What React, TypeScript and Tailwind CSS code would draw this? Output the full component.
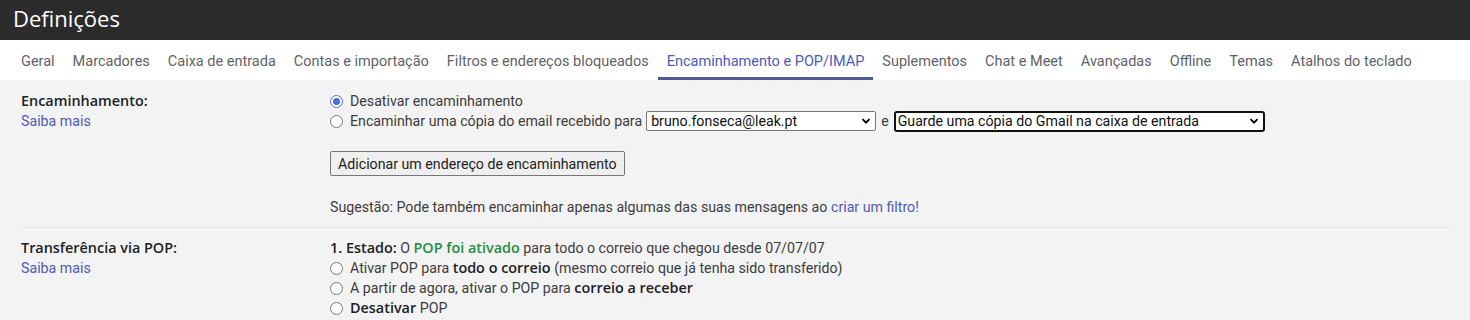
import React from 'react';

const tabs = [
  'Geral',
  'Marcadores',
  'Caixa de entrada',
  'Contas e importação',
  'Filtros e endereços bloqueados',
  'Encaminhamento e POP/IMAP',
  'Suplementos',
  'Chat e Meet',
  'Avançadas',
  'Offline',
  'Temas',
  'Atalhos do teclado',
];

const bold = "font-semibold text-[#202124] font-['Open_Sans',Roboto,sans-serif] text-[14.4px]";

function Radio({ checked = false }: { checked?: boolean }) {
  return (
    <span
      className={
        checked
          ? 'inline-flex items-center justify-center w-[13px] h-[13px] rounded-full border border-[#4a6fdc] bg-white mr-[7px] shrink-0'
          : 'inline-flex items-center justify-center w-[13px] h-[13px] rounded-full border border-[#767676] bg-white mr-[7px] shrink-0'
      }
    >
      {checked && <span className="w-[7px] h-[7px] rounded-full bg-[#4a6fdc]" />}
    </span>
  );
}

function Chevron() {
  return (
    <svg width="10" height="10" viewBox="0 0 10 10" className="shrink-0">
      <path d="M1.5 3.2 L5 6.7 L8.5 3.2" fill="none" stroke="#000" strokeWidth="1.8" />
    </svg>
  );
}

export default function App() {
  return (
    <div className="w-[1470px] h-[320px] overflow-hidden bg-[#f3f3f3] text-[14.2px] text-[#3c3c3c] font-['Roboto','Liberation_Sans',sans-serif]">
      {/* Header */}
      <div className="h-[40px] bg-[#2b2b2b] flex items-center pl-[13px] pb-[4px]">
        <span className="text-white text-[22px] leading-none font-['Open_Sans',Roboto,sans-serif]">Definições</span>
      </div>

      {/* Tabs */}
      <div className="h-[40px] bg-white flex items-stretch pl-[12px]">
        {tabs.map((t) => {
          const active = t === 'Encaminhamento e POP/IMAP';
          return (
            <div
              key={t}
              className={
                active
                  ? 'px-[9px] flex items-center text-[14.5px] text-[#4a5bb8] border-b-[3px] border-[#505a92] pt-[6px]'
                  : 'px-[9px] flex items-center text-[14.5px] text-[#5f6368] pt-[3px]'
              }
            >
              {t}
            </div>
          );
        })}
      </div>

      {/* Encaminhamento */}
      <div className="mx-[21px] pt-[11px] border-b border-[#e6e6e6] pb-[10px] flex">
        <div className="w-[309px] shrink-0 leading-[20px]">
          <div className={bold}>Encaminhamento:</div>
          <div className="text-[#4d5bb0]">Saiba mais</div>
        </div>
        <div className="leading-[20px]">
          <div className="flex items-center h-[20px]">
            <Radio checked />
            <span>Desativar encaminhamento</span>
          </div>
          <div className="flex items-center h-[20px]">
            <Radio />
            <span>Encaminhar uma cópia do email recebido para</span>
            <div className="ml-[4px] w-[230px] h-[20px] bg-white border border-[#767676] rounded-[2px] flex items-center justify-between pl-[4px] pr-[4px] text-[#111]">
              <span>bruno.fonseca@leak.pt</span>
              <Chevron />
            </div>
            <span className="mx-[5px]">e</span>
            <div className="w-[371px] h-[21px] bg-white border-2 border-[#111] rounded-[3px] flex items-center justify-between pl-[2px] pr-[4px] text-[#111]">
              <span>Guarde uma cópia do Gmail na caixa de entrada</span>
              <Chevron />
            </div>
          </div>
          <div className="mt-[20px]">
            <div className="inline-flex items-center h-[25px] px-[7px] bg-[#efefef] border border-[#767676] rounded-[2px] text-[#222]">
              Adicionar um endereço de encaminhamento
            </div>
          </div>
          <div className="mt-[21px]">
            Sugestão: Pode também encaminhar apenas algumas das suas mensagens ao{' '}
            <span className="text-[#4d5bb0]">criar um filtro!</span>
          </div>
        </div>
      </div>

      {/* Transferência via POP */}
      <div className="mx-[21px] pt-[10px] flex">
        <div className="w-[309px] shrink-0 leading-[20px]">
          <div className={bold}>Transferência via POP:</div>
          <div className="text-[#4d5bb0]">Saiba mais</div>
        </div>
        <div className="leading-[20px]">
          <div>
            <span className={bold}>1. Estado:</span> O{' '}
            <span className="font-semibold text-[#1e8e3e] font-['Open_Sans',Roboto,sans-serif] text-[14.4px]">POP foi ativado</span> para todo o correio que chegou desde 07/07/07
          </div>
          <div className="flex items-center h-[20px]">
            <Radio />
            <span>
              Ativar POP para <span className={bold}>todo o correio</span> (mesmo correio que já tenha sido transferido)
            </span>
          </div>
          <div className="flex items-center h-[20px]">
            <Radio />
            <span>
              A partir de agora, ativar o POP para <span className={bold}>correio a receber</span>
            </span>
          </div>
          <div className="flex items-center h-[20px]">
            <Radio />
            <span>
              <span className={bold}>Desativar</span> POP
            </span>
          </div>
        </div>
      </div>
    </div>
  );
}
